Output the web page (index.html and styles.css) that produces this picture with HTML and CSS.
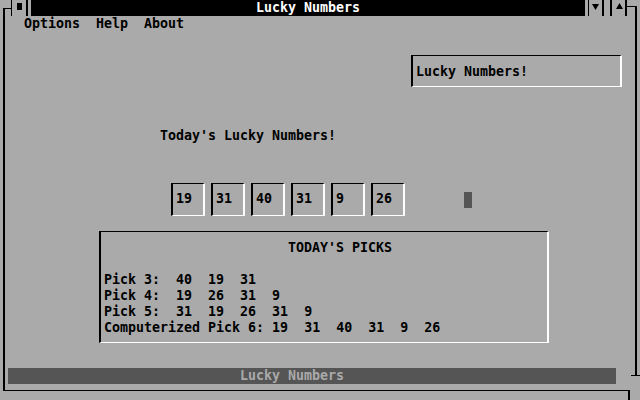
FILE: index.html
```html
<!DOCTYPE html>
<html>
<head>
<meta charset="utf-8">
<link rel="stylesheet" href="styles.css">
</head>
<body>
<div class="screen">
  <div class="titlebar">
    <div class="sysbox"><span class="sysdot"></span></div>
    <div class="title">Lucky Numbers</div>
    <div class="btn btn-min"><svg width="7" height="7" viewBox="0 0 7 7"><polygon points="0,1 7,1 3.5,7" fill="#000"/></svg></div>
    <div class="btn btn-max"><svg width="7" height="7" viewBox="0 0 7 7"><polygon points="3.5,0 7,6 0,6" fill="#000"/></svg></div>
  </div>
  <div class="menubar"><span class="menu-item">Options</span><span class="menu-item">Help</span><span class="menu-item">About</span></div>
  <div class="textbox">Lucky Numbers!</div>
  <div class="heading">Today's Lucky Numbers!</div>
  <div class="numbers">
    <div class="numbox">19</div>
    <div class="numbox">31</div>
    <div class="numbox">40</div>
    <div class="numbox">31</div>
    <div class="numbox">9</div>
    <div class="numbox">26</div>
    <div class="cursor"></div>
  </div>
  <div class="picks">
    <div class="picks-title">TODAY'S PICKS</div>
    <div class="picks-list">
      <div class="pick-row">Pick 3:  40  19  31</div>
      <div class="pick-row">Pick 4:  19  26  31  9</div>
      <div class="pick-row">Pick 5:  31  19  26  31  9</div>
      <div class="pick-row">Computerized Pick 6: 19  31  40  31  9  26</div>
    </div>
  </div>
  <div class="statusbar">Lucky Numbers</div>
  <div class="frame frame-main"></div>
  <div class="frame frame-tl"></div>
  <div class="frame frame-right"></div>
  <div class="frame frame-rb"></div>
  <div class="frame frame-br"></div>
</div>
</body>
</html>
```
FILE: styles.css
```css
html, body {
  margin: 0;
  padding: 0;
  background: #aaaaaa;
}
.screen {
  position: relative;
  width: 640px;
  height: 400px;
  overflow: hidden;
  background: #aaaaaa;
  color: #000;
  font-family: "DejaVu Sans Mono", "Liberation Mono", monospace;
  font-weight: bold;
  font-size: 13.3px;
  line-height: 16px;
}
.titlebar {
  display: flex;
  height: 16px;
}
.sysbox {
  box-sizing: border-box;
  margin-left: 11px;
  width: 17px;
  height: 16px;
  border-left: 1px solid #000;
  border-right: 2px solid #000;
}
.sysdot {
  display: block;
  width: 5px;
  height: 7px;
  margin: 3px 0 0 5px;
  background: #000;
}
.title {
  margin-left: 3px;
  width: 554px;
  height: 16px;
  background: #000;
  color: #fff;
  text-align: center;
}
.btn {
  box-sizing: border-box;
  height: 16px;
  display: flex;
  align-items: flex-start;
}
.btn svg {
  display: block;
  margin-top: 3px;
}
.btn-min {
  margin-left: 3px;
  width: 16px;
  border-left: 1px solid #000;
  border-right: 2px solid #000;
  padding-left: 3px;
}
.btn-max {
  margin-left: 6px;
  width: 17px;
  border-left: 2px solid #000;
  border-right: 2px solid #000;
  padding-left: 4px;
}
.menubar {
  display: flex;
  gap: 16px;
  height: 16px;
  padding-left: 24px;
}
.textbox {
  box-sizing: border-box;
  margin: 23px 0 0 411px;
  width: 211px;
  height: 32px;
  padding: 8px 0 0 3px;
  border-top: 1px solid #000;
  border-left: 2px solid #000;
  border-right: 2px solid #fff;
  border-bottom: 1px solid #fff;
}
.heading {
  margin: 41px 0 0 160px;
  height: 16px;
}
.numbers {
  display: flex;
  align-items: flex-start;
  gap: 6px;
  margin: 39px 0 0 171px;
}
.numbox {
  box-sizing: border-box;
  width: 34px;
  height: 33px;
  padding: 7px 0 0 3px;
  border-top: 1px solid #000;
  border-left: 2px solid #000;
  border-right: 2px solid #fff;
  border-bottom: 1px solid #fff;
}
.cursor {
  width: 8px;
  height: 16px;
  margin: 9px 0 0 53px;
  background: #555555;
}
.picks {
  box-sizing: border-box;
  margin: 15px 0 0 99px;
  width: 450px;
  height: 112px;
  padding: 8px 0 0 3px;
  border-top: 1px solid #000;
  border-left: 2px solid #000;
  border-right: 2px solid #fff;
  border-bottom: 1px solid #fff;
}
.picks-title {
  margin-left: 184px;
  height: 16px;
}
.picks-list {
  margin-top: 16px;
}
.pick-row {
  height: 16px;
  white-space: pre;
}
.statusbar {
  margin: 25px 0 0 8px;
  width: 608px;
  height: 16px;
  box-sizing: border-box;
  padding-left: 232px;
  background: #555555;
  color: #aaaaaa;
}
.frame {
  position: absolute;
  box-sizing: border-box;
}
.frame-main {
  left: 3px;
  top: 8px;
  width: 627px;
  height: 383px;
  border-left: 2px solid #000;
  border-bottom: 1px solid #000;
}
.frame-tl {
  left: 3px;
  top: 8px;
  width: 9px;
  height: 1px;
  background: #000;
}
.frame-right {
  left: 627px;
  top: 6px;
  width: 10px;
  height: 370px;
  border-top: 1px solid #000;
  border-right: 2px solid #000;
}
.frame-rb {
  left: 631px;
  top: 375px;
  width: 9px;
  height: 1px;
  background: #000;
}
.frame-br {
  left: 628px;
  top: 390px;
  width: 2px;
  height: 10px;
  background: #000;
}
```
